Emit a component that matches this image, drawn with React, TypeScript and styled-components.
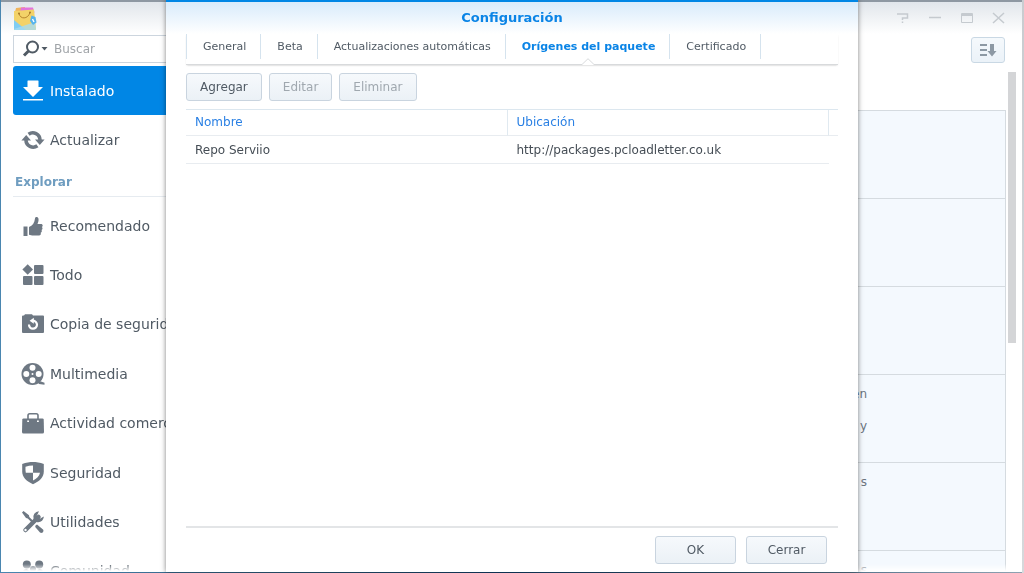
import React from "react";
import styled, { createGlobalStyle } from "styled-components";

const GlobalStyle = createGlobalStyle`
  * { box-sizing: border-box; }
  html, body, #root { height: 100%; }
  body {
    margin: 0;
    overflow: hidden;
    font-family: "DejaVu Sans", Verdana, sans-serif;
    font-size: 12px;
    color: #505a64;
  }
  button, input { font-family: inherit; }
  ul { list-style: none; margin: 0; padding: 0; }
`;

const Desktop = styled.div`
  position: relative;
  height: 100vh;
  padding: 0 2px 1px 1px;
  background:
    linear-gradient(#c9ccd0, #d6d8db) right / 2px 100% no-repeat,
    linear-gradient(90deg, #4a86b0, #2a5878 30%, #123f68 50%, #2b526e 70%, #8fa3b3) bottom / 100% 1px no-repeat,
    #4a86b0;
`;

const Window = styled.div`
  height: 100%;
  display: flex;
  flex-direction: column;
  overflow: hidden;
  border-top: 2px solid #8e98a2;
  background: linear-gradient(#e1e6eb, #ffffff 32px);
`;

const WindowBar = styled.header`
  flex: none;
  height: 32px;
  display: flex;
  justify-content: space-between;
  align-items: center;
  padding: 0 16px 0 12px;
`;

const WindowControls = styled.div`
  display: flex;
  gap: 16px;
`;

const ControlButton = styled.button`
  width: 16px;
  height: 16px;
  padding: 0;
  border: 0;
  background: none;
  color: #c5cacf;
  svg { display: block; }
`;

const WindowBody = styled.div`
  flex: 1;
  min-height: 0;
  display: flex;
  mask-image: linear-gradient(#000 calc(100% - 8px), transparent calc(100% - 1px));
`;

const Sidebar = styled.nav`
  flex: none;
  width: 240px;
  padding: 1px 12px 0;
  overflow: hidden;
`;

const SearchBox = styled.label`
  display: flex;
  align-items: center;
  height: 28px;
  margin-bottom: 3px;
  padding-left: 8px;
  border: 1px solid #ccd5de;
  background: #fff;
  color: #505a64;
`;

const SearchInput = styled.input`
  flex: 1;
  min-width: 0;
  margin-left: 6px;
  padding: 0;
  border: 0;
  outline: 0;
  background: none;
  font-size: 12px;
  &::placeholder { color: #a0a4a8; opacity: 1; }
`;

const ExploreList = styled.ul`
  display: grid;
  grid-template-rows: repeat(8, 1fr);
  height: 395px;
  margin-top: 4px;
  li { display: grid; }
`;

const NavLink = styled.a<{ $active?: boolean }>`
  display: flex;
  align-items: center;
  gap: 5px;
  min-height: 49px;
  padding-left: 8px;
  border-radius: 3px;
  background: ${(p) => (p.$active ? "#0086e5" : "transparent")};
  color: ${(p) => (p.$active ? "#ffffff" : "#505a64")};
  font-size: 14px;
  white-space: nowrap;
  text-decoration: none;
  svg { flex: none; color: ${(p) => (p.$active ? "#ffffff" : "#6e7883")}; }
`;

const NavHeading = styled.h2`
  height: 33px;
  margin: 0;
  padding: 0 2px;
  border-bottom: 1px solid #e6ebf0;
  color: #6f9dc0;
  font-size: 12px;
  font-weight: bold;
  line-height: 36px;
`;

const Main = styled.main`
  flex: 1;
  min-width: 0;
  display: flex;
  flex-direction: column;
`;

const Toolbar = styled.div`
  flex: none;
  display: flex;
  justify-content: flex-end;
  height: 38px;
  padding: 3px 17px 0 0;
`;

const SortButton = styled.button`
  display: flex;
  align-items: center;
  justify-content: center;
  width: 34px;
  height: 26px;
  padding: 0;
  border: 1px solid #c9d8e4;
  border-radius: 3px;
  background: linear-gradient(#f5f9fc, #ebf2f8);
  color: #8d99a4;
`;

const Scroller = styled.div`
  flex: 1;
  min-height: 0;
  display: flex;
  gap: 2px;
  padding-right: 6px;
  overflow: hidden;
`;

const CardList = styled.ul`
  flex: 1;
  margin-top: 38px;
  border: 1px solid #d5dbe0;
`;

const Card = styled.li`
  height: 88px;
  padding: 11px 138px 0 0;
  border-bottom: 1px solid #d5dbe0;
  background: #f4f9fe;
  color: #6b757f;
  text-align: right;
  line-height: 16px;
  p { margin: 0 0 16px; }
`;

const ScrollThumb = styled.div`
  width: 8px;
  height: 271px;
  background: #d4d5d7;
`;

const DialogLayer = styled.div`
  position: absolute;
  inset: 0 0 1px;
  display: flex;
  justify-content: center;
`;

const Dialog = styled.section`
  display: flex;
  flex-direction: column;
  width: 692px;
  max-width: 100%;
  padding: 0 20px 8px;
  border-top: 2px solid #0086e5;
  background: linear-gradient(#d8ebfb, #ffffff 32px);
  box-shadow: 0 0 5px rgba(0, 0, 0, 0.5);
`;

const DialogTitle = styled.h1`
  flex: none;
  height: 32px;
  margin: 0;
  color: #0a84e6;
  font-size: 13px;
  line-height: 32px;
  text-align: center;
`;

const TabBar = styled.div`
  flex: none;
  display: flex;
  height: 31px;
  border-bottom: 1px solid #d8dadc;
  box-shadow: 0 1px 2px -1px rgba(0, 0, 0, 0.3);
`;

const Tab = styled.button<{ $active?: boolean }>`
  position: relative;
  height: 25px;
  padding: 0 14px 0 16px;
  border: 0;
  border-right: 1px solid #d5e3ee;
  background: none;
  color: ${(p) => (p.$active ? "#0a84e6" : "#505a64")};
  font-size: 11px;
  font-weight: ${(p) => (p.$active ? "bold" : "normal")};
  white-space: nowrap;
  &:first-child { border-left: 1px solid #d5e3ee; }
`;

const TabPointer = styled.svg`
  position: absolute;
  left: calc(50% - 7px);
  top: 24px;
`;

const Actions = styled.div`
  flex: none;
  display: flex;
  gap: 7px;
  padding: 8px 0;
`;

const Button = styled.button<{ $wide?: boolean }>`
  height: 28px;
  min-width: ${(p) => (p.$wide ? "81px" : "0")};
  padding: 0 13px;
  border: 1px solid #c9d4df;
  border-radius: 3px;
  background: linear-gradient(#f6f9fc, #ebf1f6);
  color: #505a64;
  font-size: 12px;
  &:disabled { color: #a0a8af; }
`;

const TableArea = styled.div`
  flex: 1;
  min-height: 0;
`;

const SourceTable = styled.table`
  width: 100%;
  table-layout: fixed;
  border-collapse: separate;
  border-spacing: 0;
  border-top: 1px solid #dce7ef;
  th, td {
    height: 28px;
    padding: 0 9px;
    border-bottom: 1px solid #e8ecf0;
    text-align: left;
    font-size: 12px;
    font-weight: normal;
  }
  th {
    height: 26px;
    padding-bottom: 1px;
    color: #2a80e4;
    border-right: 1px solid #e0e9f0;
  }
  td { color: #454d55; }
  th:last-child, td:last-child { width: 9px; padding: 0; border-right: 0; }
  td:last-child { border-bottom: 0; }
`;

const DialogFooter = styled.footer`
  flex: none;
  display: flex;
  justify-content: flex-end;
  gap: 10px;
  padding: 8px 11px 0 0;
  border-top: 2px solid #e3e5e7;
`;

const Icon = ({ children }: { children: React.ReactNode }) => (
  <svg width="24" height="24" viewBox="0 0 24 24" fill="currentColor" aria-hidden="true">
    {children}
  </svg>
);

const icons = {
  download: (
    <Icon>
      <path d="M6.500 2q0-.5.500-.5h10q.5 0 .5.500v6H22L12 18 2 8h4.500z" />
      <path d="M2 20h20v1.500H2z" />
    </Icon>
  ),
  refresh: (
    <Icon>
      <g fill="none" stroke="currentColor" strokeWidth="3.600">
        <path d="M7.600 6.200A7.200 7.200 0 0 1 19 12" />
        <path d="M16.400 17.800A7.200 7.200 0 0 1 5 12" />
      </g>
      <path d="M14 11.500h9.600l-4.800 5.600zM10 12.500H.4l4.800-5.600z" />
    </Icon>
  ),
  thumb: (
    <Icon>
      <path d="M2.500 12.500h4V22h-4zM8 13c3.500-1.500 5.500-4 6-8.500.3-2 3-2 3.500.3.300 2-.4 3.700-1 5.200h3.500c2 0 2.200 2.500.8 3 1.200.8.800 2.500-.3 3 .8 1 .3 2.300-.8 2.700.5 1.300-.2 2.800-1.700 2.800h-5.500c-2 0-3-.2-4.500-.7z" />
    </Icon>
  ),
  grid: (
    <Icon>
      <rect x="13" y="2" width="9.500" height="9" rx="1" />
      <rect x="2" y="13" width="9.500" height="9" rx="1" />
      <rect x="13" y="13" width="9.500" height="9" rx="1" />
      <path d="M6.700 1.200l5.300 5.300-5.300 5.300L1.400 6.500z" />
    </Icon>
  ),
  backup: (
    <Icon>
      <path d="M1 4.500q0-1 1-1h1l1-1.200h7l1 1.200h10q1 0 1 1V20q0 1-1 1H2q-1 0-1-1z" />
      <path d="M8 12.500a4 4 0 1 0 4-3.800" fill="none" stroke="#fff" strokeWidth="2.200" />
      <path d="M12.800 5.800v6L8.600 8.700z" fill="#fff" />
    </Icon>
  ),
  film: (
    <Icon>
      <path d="M16 19l4 .5 3.500 1.200v2L18 22z" />
      <circle cx="11.500" cy="12" r="11" />
      <g fill="#fff">
        <circle cx="11.500" cy="5.800" r="3" />
        <circle cx="11.500" cy="18.200" r="3" />
        <circle cx="5.300" cy="12" r="3" />
        <circle cx="17.700" cy="12" r="3" />
        <circle cx="11.500" cy="12" r="1" />
      </g>
    </Icon>
  ),
  briefcase: (
    <Icon>
      <path d="M7 8V4.500q0-1.700 1.700-1.700h6.600q1.700 0 1.700 1.700V8" fill="none" stroke="currentColor" strokeWidth="1.600" />
      <path d="M2.500 7.500h19q1 0 1.200 1L23 21q0 1.500-1.500 1.500h-19Q1 22.500 1 21l.3-12.500q.2-1 1.200-1z" />
      <path d="M6.200 9.500h1.800v1.500H6.200zM16 9.500h1.800v1.500H16z" fill="#fff" />
    </Icon>
  ),
  shield: (
    <Icon>
      <path d="M12 1c3 0 7 .6 10.800 2v7.500c0 5.500-4.300 10-10.800 12.700C5.500 20.500 1.200 16 1.200 10.500V3C5 1.600 9 1 12 1z" />
      <path d="M12 4.500v7.300H4.800q-.5-3-.3-6Q8 4.600 12 4.500zM12 11.800h7c-.7 3.400-3.300 6-7 7.700z" fill="#fff" />
    </Icon>
  ),
  tools: (
    <Icon>
      <path d="M4.500 20L17.500 7" stroke="currentColor" strokeWidth="4.500" strokeLinecap="round" />
      <path d="M18 1.200a6 6 0 0 0-5.400 8l2.800 2.700c3.600 1.200 7.200-1.200 7.400-5.400l-3.900 2.300-3.200-2.700z" />
      <path d="M1 2.500L2.500 1 8 5.200l.3 1.800 3.500 3.500-1.500 1.500L6.800 8.500 5 8zM14.500 15.500l1.500-1 6 5c1.500 2-1 4.500-3 3l-4.800-5.500z" />
      <circle cx="4.500" cy="20" r="1.200" fill="#fff" />
    </Icon>
  ),
  people: (
    <Icon>
      <circle cx="5.800" cy="5.500" r="4" />
      <circle cx="18.200" cy="5.500" r="4" />
      <path d="M1 18c0-5 1-8 5-8l4 4v8H1zM23 18c0-5-1-8-5-8l-4 4v8h9z" />
      <circle cx="12" cy="10" r="3" />
      <path d="M6 24c0-6 2-10 6-10s6 4 6 10z" />
    </Icon>
  ),
};

const exploreItems = [
  { label: "Recomendado", icon: icons.thumb },
  { label: "Todo", icon: icons.grid },
  { label: "Copia de seguridad", icon: icons.backup },
  { label: "Multimedia", icon: icons.film },
  { label: "Actividad comercial", icon: icons.briefcase },
  { label: "Seguridad", icon: icons.shield },
  { label: "Utilidades", icon: icons.tools },
  { label: "Comunidad", icon: icons.people },
];

const cards: string[][] = [[], [], [], ["en", "y"], ["s"], ["s"]];

const tabs = ["General", "Beta", "Actualizaciones automáticas", "Orígenes del paquete", "Certificado"];
const activeTab = "Orígenes del paquete";

const AppLogo = () => (
  <svg width="24" height="24" viewBox="0 0 24 24" aria-hidden="true">
    <path d="M3 2l9-1-1 5H2z" fill="#f0b45c" />
    <path d="M8 1.500h12l1.500 5H7z" fill="#e374dc" />
    <path d="M1 5l20-1.500 2 19.500q0 1-1 1H2q-1 0-1-1z" fill="#f3d268" />
    <path d="M1 14l12 10H2q-1 0-1-1z" fill="#7fcdf3" />
    <path d="M1 23l21-7 1 7q0 1-1 1H2z" fill="#a5dcf2" opacity=".8" />
    <path d="M6 7.500c1 6 9 6 11-1" fill="none" stroke="#b8862e" />
    <circle cx="6" cy="7.500" r="1" fill="#a87828" />
    <circle cx="17" cy="6.500" r="1" fill="#a87828" />
    <path d="M18.500 9.500l4 1.500 1 5.500-3.500 2.500-3-4z" fill="#56b4ee" />
    <path d="M19.500 13l1.500 3" stroke="#fff" strokeWidth="1.400" />
  </svg>
);

export default function App() {
  return (
    <>
      <GlobalStyle />
      <Desktop>
        <Window>
          <WindowBar>
            <AppLogo />
            <WindowControls>
              <ControlButton aria-label="Ayuda">
                <svg width="16" height="16" viewBox="0 0 16 16" fill="none" stroke="currentColor" strokeWidth="1.500">
                  <path d="M3 4h10.500v4H8.500v2M8.500 11.500V13" />
                </svg>
              </ControlButton>
              <ControlButton aria-label="Minimizar">
                <svg width="16" height="16" viewBox="0 0 16 16" stroke="currentColor" strokeWidth="1.500">
                  <path d="M3 7.500h12" />
                </svg>
              </ControlButton>
              <ControlButton aria-label="Maximizar">
                <svg width="16" height="16" viewBox="0 0 16 16" fill="none" stroke="currentColor">
                  <path d="M3.500 3.500h11v9h-11zM3.500 4.500h11M3.500 5.500h11" />
                </svg>
              </ControlButton>
              <ControlButton aria-label="Cerrar ventana">
                <svg width="16" height="16" viewBox="0 0 16 16" stroke="currentColor" strokeWidth="1.500">
                  <path d="M3 3l11 10M14 3L3 13" />
                </svg>
              </ControlButton>
            </WindowControls>
          </WindowBar>
          <WindowBody>
            <Sidebar>
              <SearchBox>
                <svg width="26" height="18" viewBox="0 0 26 18" fill="none" stroke="currentColor" aria-hidden="true">
                  <circle cx="10.500" cy="7" r="5.500" strokeWidth="2" />
                  <path d="M6.500 11L2 15.500" strokeWidth="3" />
                  <path d="M19.500 7h6l-3 3.500z" fill="currentColor" stroke="none" />
                </svg>
                <SearchInput type="text" placeholder="Buscar" aria-label="Buscar" />
              </SearchBox>
              <NavLink href="#instalado" $active>
                {icons.download}
                Instalado
              </NavLink>
              <NavLink href="#actualizar">
                {icons.refresh}
                Actualizar
              </NavLink>
              <NavHeading>Explorar</NavHeading>
              <ExploreList>
                {exploreItems.map((item) => (
                  <li key={item.label}>
                    <NavLink href="#explorar">
                      {item.icon}
                      {item.label}
                    </NavLink>
                  </li>
                ))}
              </ExploreList>
            </Sidebar>
            <Main>
              <Toolbar>
                <SortButton aria-label="Ordenar">
                  <svg width="18" height="16" viewBox="0 0 18 16" fill="currentColor" aria-hidden="true">
                    <path d="M1 2h7v2H1zM1 7h7v2H1zM1 12h7v2H1zM11 2h4v7h2.500L13 14.500 8.500 9H11z" />
                  </svg>
                </SortButton>
              </Toolbar>
              <Scroller>
                <CardList>
                  {cards.map((lines, i) => (
                    <Card key={i}>
                      {lines.map((line) => (
                        <p key={line}>{line}</p>
                      ))}
                    </Card>
                  ))}
                </CardList>
                <ScrollThumb />
              </Scroller>
            </Main>
          </WindowBody>
        </Window>
        <DialogLayer>
          <Dialog role="dialog" aria-labelledby="dialog-title">
            <DialogTitle id="dialog-title">Configuración</DialogTitle>
            <TabBar role="tablist">
              {tabs.map((tab) => (
                <Tab key={tab} role="tab" aria-selected={tab === activeTab} $active={tab === activeTab}>
                  {tab}
                  {tab === activeTab && (
                    <TabPointer width="14" height="7" viewBox="0 0 14 7" aria-hidden="true">
                      <path d="M0 7L7 0l7 7z" fill="#fff" />
                      <path d="M0 6.500h1L7 .7l6 5.800h1" fill="none" stroke="#d8dadc" />
                    </TabPointer>
                  )}
                </Tab>
              ))}
            </TabBar>
            <Actions>
              <Button>Agregar</Button>
              <Button disabled>Editar</Button>
              <Button disabled>Eliminar</Button>
            </Actions>
            <TableArea>
              <SourceTable>
                <thead>
                  <tr>
                    <th scope="col">Nombre</th>
                    <th scope="col">Ubicación</th>
                    <th aria-hidden="true" />
                  </tr>
                </thead>
                <tbody>
                  <tr>
                    <td>Repo Serviio</td>
                    <td>http://packages.pcloadletter.co.uk</td>
                    <td />
                  </tr>
                </tbody>
              </SourceTable>
            </TableArea>
            <DialogFooter>
              <Button $wide>OK</Button>
              <Button $wide>Cerrar</Button>
            </DialogFooter>
          </Dialog>
        </DialogLayer>
      </Desktop>
    </>
  );
}
